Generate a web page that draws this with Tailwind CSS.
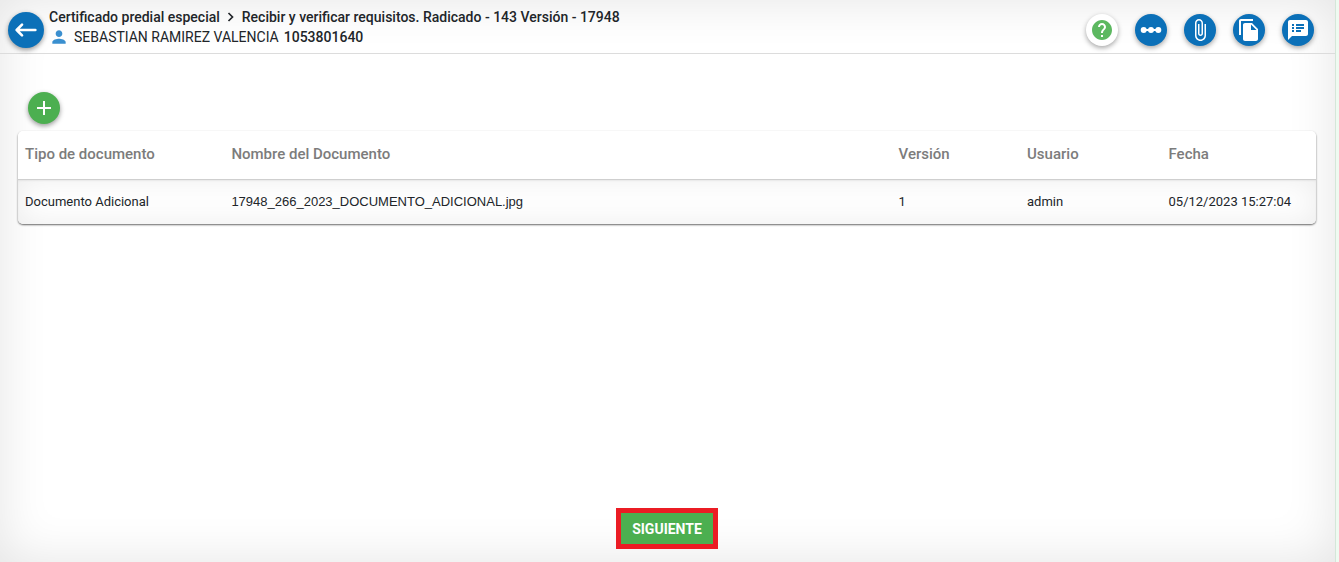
<!DOCTYPE html>
<html lang="es">
<head>
    <meta charset="UTF-8">
    <meta name="viewport" content="width=device-width, initial-scale=1.0">
    <title>Certificado predial especial</title>
    <script src="https://cdn.jsdelivr.net/npm/@tailwindcss/browser@4"></script>
</head>
<body class="bg-[#effaf1] font-['Roboto',sans-serif] text-[#212529]">

    <div class="mr-[3px] flex min-h-screen flex-col border-r border-[#d5e6d9] bg-white shadow-[inset_0_0_50px_rgba(0,0,0,0.11)]">
        <!-- Top bar -->
        <header class="flex h-[54px] items-center border-b border-[#dcdcdc] pt-1.5 pr-[21px] pl-2">
            <button type="button" aria-label="Volver" class="flex size-9 items-center justify-center rounded-full bg-[#0b70b8] text-white shadow-[0_2px_5px_rgba(0,0,0,0.4)]">
                <svg class="size-8" viewBox="0 0 24 24" fill="none" stroke="currentColor" stroke-width="2" stroke-linecap="round" stroke-linejoin="round"><path d="M19 12H5M9 8l-4 4 4 4"/></svg>
            </button>

            <div class="ml-[5px] flex-1 pb-1.5">
                <h1 class="flex items-center text-sm leading-5 font-medium">
                    <a href="#">Certificado predial especial</a>
                    <svg class="mx-1.5 size-2.5" viewBox="0 0 10 10" fill="none" stroke="currentColor" stroke-width="1.7"><path d="M2.5 1l4 4-4 4"/></svg>
                    <span>Recibir y verificar requisitos. Radicado - 143 Versión - 17948</span>
                </h1>
                <p class="flex items-center gap-[5px] text-sm leading-5">
                    <svg class="size-5" viewBox="0 0 24 24" fill="#3a8fcf"><path d="M12 12c2.21 0 4-1.79 4-4s-1.79-4-4-4-4 1.79-4 4 1.79 4 4 4zm0 2c-2.67 0-8 1.34-8 4v2h16v-2c0-2.66-5.33-4-8-4z"/></svg>
                    <span>SEBASTIAN RAMIREZ VALENCIA</span>
                    <span class="font-medium">1053801640</span>
                </p>
            </div>

            <nav class="flex gap-[17px]">
                <button type="button" aria-label="Ayuda" class="flex size-8 items-center justify-center rounded-full bg-white text-[#5cb860] shadow-[0_2px_5px_rgba(0,0,0,0.35)]">
                    <svg class="size-6" viewBox="0 0 24 24" fill="currentColor"><path d="M12 2C6.48 2 2 6.48 2 12s4.48 10 10 10 10-4.48 10-10S17.52 2 12 2zm1 17h-2v-2h2v2zm2.07-7.75l-.9.92C13.45 12.9 13 13.5 13 15h-2v-.5c0-1.1.45-2.1 1.17-2.83l1.24-1.26c.37-.36.59-.86.59-1.41 0-1.1-.9-2-2-2s-2 .9-2 2H8c0-2.21 1.79-4 4-4s4 1.79 4 4c0 .88-.36 1.68-.93 2.25z"/></svg>
                </button>
                <button type="button" aria-label="Flujo" class="flex size-8 items-center justify-center rounded-full bg-[#0b70b8] text-white shadow-[0_2px_5px_rgba(0,0,0,0.35)]">
                    <svg class="size-6" viewBox="0 0 24 24" fill="currentColor"><path d="M4 11h16v2H4z"/><circle cx="4.7" cy="12" r="3"/><circle cx="12" cy="12" r="3"/><circle cx="19.3" cy="12" r="3"/></svg>
                </button>
                <button type="button" aria-label="Adjuntos" class="flex size-8 items-center justify-center rounded-full bg-[#0b70b8] text-white shadow-[0_2px_5px_rgba(0,0,0,0.35)]">
                    <svg class="size-6" viewBox="0 0 24 24" fill="currentColor"><path d="M16.5 6v11.5c0 2.21-1.79 4-4 4s-4-1.79-4-4V5c0-1.38 1.12-2.5 2.5-2.5s2.5 1.12 2.5 2.5v10.5c0 .55-.45 1-1 1s-1-.45-1-1V6H10v9.5c0 1.38 1.12 2.5 2.5 2.5s2.5-1.12 2.5-2.5V5c0-2.21-1.79-4-4-4S7 2.79 7 5v12.5c0 3.04 2.46 5.5 5.5 5.5s5.5-2.46 5.5-5.5V6h-1.5z"/></svg>
                </button>
                <button type="button" aria-label="Copiar" class="flex size-8 items-center justify-center rounded-full bg-[#0b70b8] text-white shadow-[0_2px_5px_rgba(0,0,0,0.35)]">
                    <svg class="size-6" viewBox="0 0 24 24" fill="currentColor"><path d="M16 1H4c-1.1 0-2 .9-2 2v14h2V3h12V1zm-1 4l6 6v10c0 1.1-.9 2-2 2H7.99C6.89 23 6 22.1 6 21l.01-14c0-1.1.89-2 1.99-2h7zm-1 7h5.5L14 6.5V12z"/></svg>
                </button>
                <button type="button" aria-label="Comentarios" class="flex size-8 items-center justify-center rounded-full bg-[#0b70b8] text-white shadow-[0_2px_5px_rgba(0,0,0,0.35)]">
                    <svg class="size-6" viewBox="0 0 24 24" fill="currentColor"><path d="M20 2H4c-1.1 0-1.99.9-1.99 2L2 22l4-4h14c1.1 0 2-.9 2-2V4c0-1.1-.9-2-2-2zM8 14H6v-2h2v2zm0-3H6V9h2v2zm0-3H6V6h2v2zm7 6h-5v-2h5v2zm3-3h-8V9h8v2zm0-3h-8V6h8v2z"/></svg>
                </button>
            </nav>
        </header>

        <!-- Documents -->
        <main class="flex flex-1 flex-col pt-[38px] pr-[19px] pb-[13px] pl-[18px]">
            <button type="button" aria-label="Agregar documento" class="ml-2.5 flex size-8 items-center justify-center rounded-full bg-[#4caf50] text-white shadow-[0_2px_5px_rgba(0,0,0,0.4)]">
                <svg class="size-6" viewBox="0 0 24 24" fill="none" stroke="currentColor" stroke-width="2"><path d="M12 5v14M5 12h14"/></svg>
            </button>

            <div class="mt-[7px] overflow-hidden rounded-[5px] shadow-[0_1px_2px_rgba(0,0,0,0.6)]">
                <table class="w-full table-fixed text-left">
                    <thead class="bg-white text-[15px] text-[#7c7c7c]">
                        <tr class="h-12 border-b border-[#cfcfcf]">
                            <th class="w-[15.9%] px-[7px] pb-0.5 font-medium">Tipo de documento</th>
                            <th class="w-[51.4%] px-[7px] pb-0.5 font-medium">Nombre del Documento</th>
                            <th class="w-[9.9%] px-[7px] pb-0.5 font-medium">Versión</th>
                            <th class="w-[10.9%] px-[7px] pb-0.5 font-medium">Usuario</th>
                            <th class="px-[7px] pb-0.5 font-medium">Fecha</th>
                        </tr>
                    </thead>
                    <tbody class="bg-white text-[13px]">
                        <tr class="h-[45px] shadow-[inset_0_0_30px_rgba(0,0,0,0.08),inset_0_2px_2px_rgba(0,0,0,0.06)]">
                            <td class="px-[7px]">Documento Adicional</td>
                            <td class="px-[7px] font-['Liberation_Sans',sans-serif]">17948_266_2023_DOCUMENTO_ADICIONAL.jpg</td>
                            <td class="px-[7px]">1</td>
                            <td class="px-[7px]">admin</td>
                            <td class="px-[7px]">05/12/2023 15:27:04</td>
                        </tr>
                    </tbody>
                </table>
            </div>

            <div class="mt-auto flex justify-center">
                <button type="button" class="h-[41px] border-5 border-[#eb1c24] bg-[#4caf50] px-[11px] text-sm font-bold text-white">SIGUIENTE</button>
            </div>
        </main>
    </div>

</body>
</html>
